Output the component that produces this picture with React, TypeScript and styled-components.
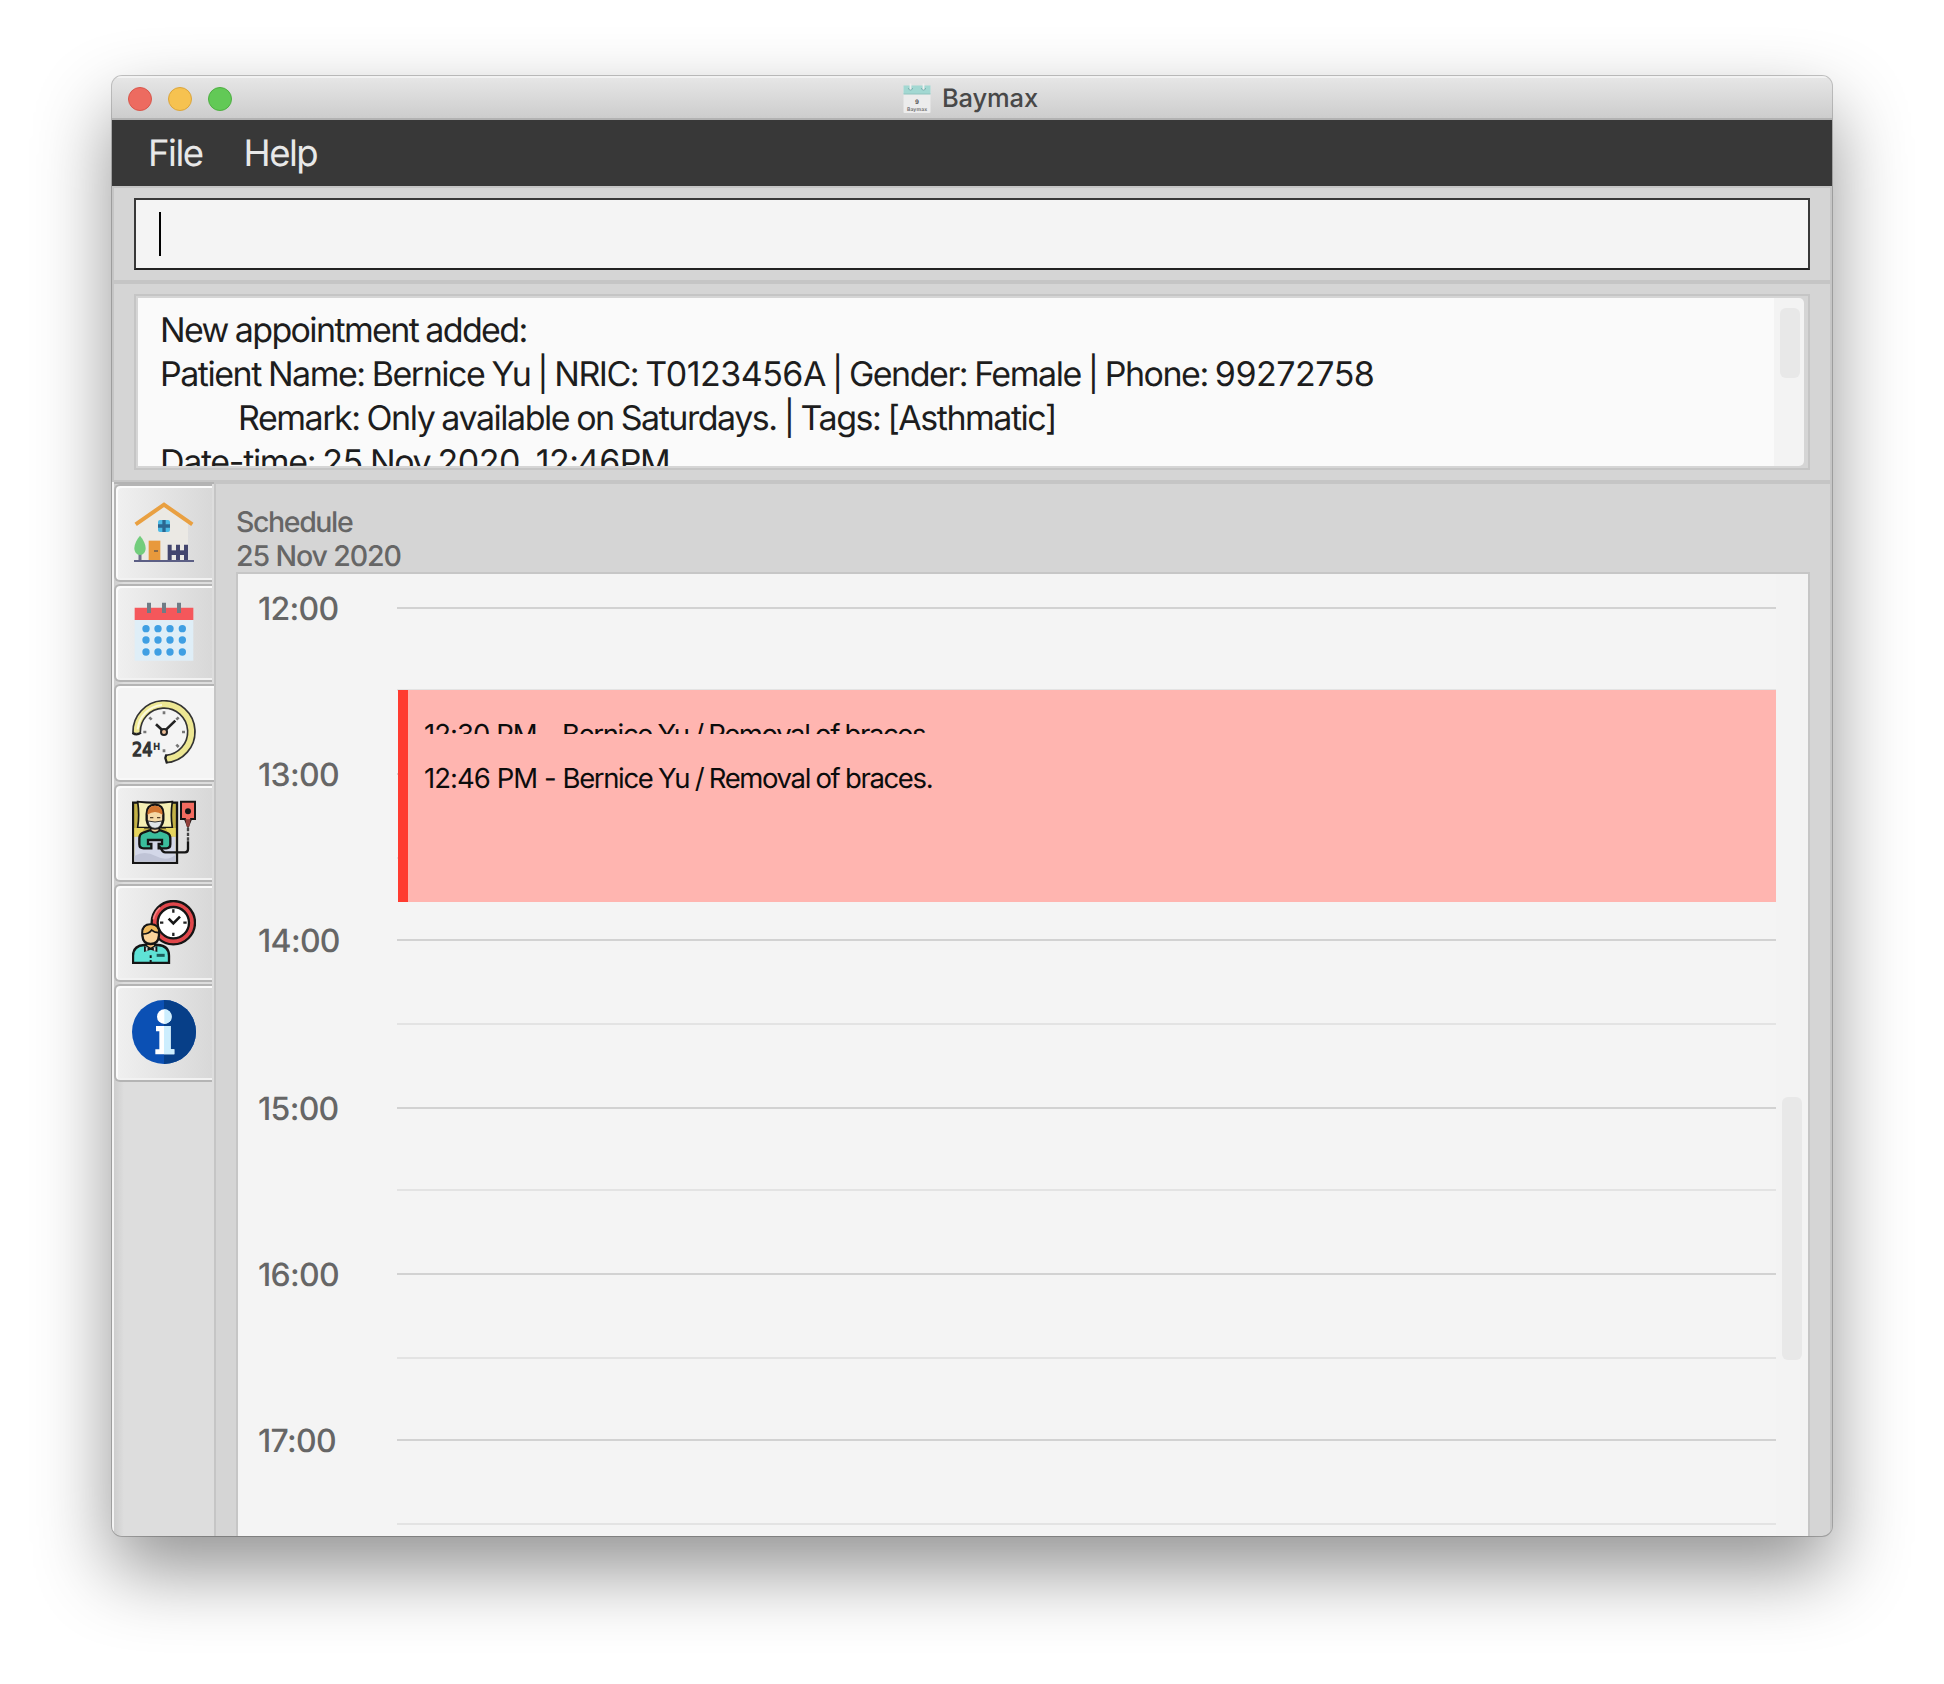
import React from 'react';
import styled, { createGlobalStyle } from 'styled-components';

const GlobalStyle = createGlobalStyle`
  * { box-sizing: border-box; }
  body {
    margin: 0;
    background: #fff;
    font-family: Inter, "Liberation Sans", sans-serif;
    text-rendering: geometricPrecision;
  }
`;

const Desktop = styled.div`
  width: 1944px;
  height: 1684px;
  padding: 76px 112px 148px;
  overflow: hidden;
`;

const Window = styled.div`
  display: flex;
  flex-direction: column;
  height: 1460px;
  border-radius: 10px;
  overflow: hidden;
  background: #d5d5d5;
  box-shadow: 0 0 0 1px rgba(0, 0, 0, 0.22), 0 34px 76px rgba(0, 0, 0, 0.43);
`;

const TitleBar = styled.header`
  display: grid;
  grid-template-columns: 1fr auto 1fr;
  align-items: center;
  height: 44px;
  padding: 0 16px;
  background: linear-gradient(#e7e7e7, #cdcdcd);
  border-bottom: 2px solid #b2b2b2;
  box-shadow: inset 0 2px 0 #f2f2f2;
`;

const Lights = styled.div`
  display: flex;
  gap: 16px;
`;

const Light = styled.span<{ $fill: string; $edge: string }>`
  width: 24px;
  height: 24px;
  margin-top: 2px;
  border-radius: 50%;
  background: ${(p) => p.$fill};
  border: 1px solid ${(p) => p.$edge};
`;

const Title = styled.h1`
  display: flex;
  align-items: center;
  gap: 11px;
  margin: 0;
  padding: 3px 3px 0 0;
  font-size: 25.5px;
  font-weight: 450;
  line-height: 40px;
  letter-spacing: -0.1px;
  color: #484848;
`;

const TitleIcon = styled.svg`
  width: 28px;
  height: 32px;
  margin-top: -3px;
`;

const MenuBar = styled.nav`
  display: flex;
  align-items: center;
  gap: 41px;
  height: 66px;
  padding: 0 36px;
  background: #383838;
`;

const MenuItem = styled.span`
  font-size: 36.5px;
  line-height: 66px;
  letter-spacing: -1.5px;
  color: #e8e8e8;
`;

const Pane = styled.section<{ $height: number }>`
  height: ${(p) => p.$height}px;
  padding: 10px 20px;
  border: 2px solid #c5c5c5;
  background: #d5d5d5;
`;

const CommandField = styled.div`
  display: flex;
  align-items: center;
  height: 72px;
  padding-left: 23px;
  background: #f4f4f4;
  border: 2px solid #383838;
  border-bottom-color: #222;
`;

const Caret = styled.span`
  width: 2px;
  height: 44px;
  background: #000;
`;

const ResultBox = styled.div`
  display: flex;
  height: 176px;
  padding: 2px 4px 2px 2px;
  border: 2px solid #c5c5c5;
`;

const ResultText = styled.div`
  flex: 1;
  overflow: hidden;
  padding: 11px 22px 0;
  background: #fafafa;
`;

const ResultLine = styled.div<{ $indent?: boolean; $spacing: number }>`
  padding-left: ${(p) => (p.$indent ? 78 : 0)}px;
  font-size: 34px;
  line-height: 44px;
  letter-spacing: ${(p) => p.$spacing}px;
  word-spacing: -1px;
  white-space: pre;
  color: #1d1d1d;
`;

const Digits = styled.span`
  letter-spacing: -0.5px;
`;

const ResultTrack = styled.div`
  width: 30px;
  padding: 10px 4px 0 6px;
  background: #f3f3f3;
  border-radius: 0 5px 5px 0;
`;

const Thumb = styled.div<{ $height: number }>`
  width: 20px;
  height: ${(p) => p.$height}px;
  border-radius: 6px;
  background: #e8e8e8;
`;

const Body = styled.div`
  display: flex;
  flex: 1;
  min-height: 0;
`;

const TabStrip = styled.aside`
  display: flex;
  width: 102px;
  border-left: 2px solid #f4f4f4;
`;

const TabColumn = styled.div`
  display: flex;
  flex: 1;
  flex-direction: column;
  gap: 2px;
  border-top: 2px solid #b3b3b3;
  border-right: 2px solid #cfcfcf;
  background: linear-gradient(90deg, #cdcdcd, #dddddd 10px);
`;

const Tab = styled.div<{ $active?: boolean }>`
  flex: none;
  width: ${(p) => (p.$active ? 100 : 98)}px;
  height: 98px;
  padding: 14px 0 0 16px;
  border: 2px solid #b4b4b4;
  border-right: 0;
  border-radius: 6px 0 0 6px;
  background: ${(p) => (p.$active ? '#f4f4f4' : 'linear-gradient(90deg, #f0f0f0, #d8d8d8)')};
  box-shadow: inset 2px 2px 0 #fbfbfb, inset 0 -2px 0 ${(p) => (p.$active ? '#f8f8f8' : '#f2f2f2')};
`;

const TabIcon = styled.svg`
  display: block;
  width: 64px;
  height: 64px;
`;

const Content = styled.main`
  display: flex;
  flex: 1;
  flex-direction: column;
  min-width: 0;
  padding: 20px 20px 0;
  border: 2px solid #c5c5c5;
  border-bottom: 0;
`;

const Headings = styled.div`
  height: 68px;
  padding-top: 1px;
`;

const Heading = styled.div<{ $spacing: number }>`
  font-size: 28.5px;
  font-weight: 450;
  line-height: 34px;
  letter-spacing: ${(p) => p.$spacing}px;
  color: #666;
`;

const Schedule = styled.section`
  display: flex;
  flex: 1;
  min-height: 0;
  overflow: hidden;
  border: 2px solid #c6c6c6;
  border-bottom: 0;
  background: #f4f4f4;
`;

const Timeline = styled.div`
  position: relative;
  flex: 1;
  padding-top: 33px;
`;

const HourRow = styled.div`
  display: grid;
  grid-template-columns: 159px 1fr;
`;

const HourLabel = styled.div`
  margin-top: -18px;
  padding-left: 20px;
  height: 40px;
  font-size: 32px;
  font-weight: 450;
  line-height: 40px;
  letter-spacing: -0.7px;
  color: #666;
`;

const Slot = styled.div<{ $height: number; $half?: boolean }>`
  height: ${(p) => p.$height}px;
  border-top: 2px solid ${(p) => (p.$half ? '#e3e3e3' : '#d2d2d2')};
`;

const AppointmentCard = styled.div<{ $top: number; $height: number }>`
  position: absolute;
  top: ${(p) => p.$top}px;
  left: 160px;
  right: 0;
  height: ${(p) => p.$height}px;
  padding: 24px 0 0 16px;
  border-left: 10px solid #ff3b30;
  background: #ffb5b0;
  font-size: 27.5px;
  line-height: 40px;
  letter-spacing: -1.37px;
  word-spacing: -0.8px;
  white-space: pre;
  color: #0c0c0c;
`;

const StartTime = styled.span`
  letter-spacing: -0.95px;
  word-spacing: 0;
`;

const ScheduleTrack = styled.div`
  width: 32px;
  padding: 523px 6px 0;
  background: #f3f3f3;
`;

const HomeIcon = () => (
  <TabIcon viewBox="0 0 192 192">
    <path d="M24 66 96 14l72 52v114H24z" fill="#ebe9e4" />
    <path d="M11 73 96 14l85 59" fill="none" stroke="#e9a041" strokeWidth="12" />
    <rect x="78" y="60" width="36" height="36" rx="6" fill="#4dbbe6" />
    <path d="M96 60v36M78 78h36" stroke="#2c6791" strokeWidth="10" />
    <path d="M24 150v31" stroke="#6d7089" strokeWidth="9" />
    <path d="M24 107c10 12 17 26 17 37 0 12-7 21-17 21S7 156 7 144c0-11 7-25 17-37z" fill="#72cd7c" />
    <rect x="50" y="122" width="35" height="58" fill="#e8993c" />
    <path d="M66 153h12" stroke="#8a6a48" strokeWidth="6" />
    <path d="M113 134v46M138 134v46M162 134v46" stroke="#43466e" strokeWidth="12" />
    <path d="M108 158h60" stroke="#43466e" strokeWidth="14" />
    <path d="M6 183h180" stroke="#5c5f85" strokeWidth="6" />
  </TabIcon>
);

const CalendarIcon = () => (
  <TabIcon viewBox="0 0 192 192">
    <path d="M8 60h176v122H8z" fill="#dfeef7" />
    <path d="M8 23h176v37H8z" fill="#f5575b" />
    <path d="M51 8v31M96 8v31M141 8v31" stroke="#707b85" strokeWidth="12" />
    {[86, 120, 156].map((y) =>
      [42, 78, 114, 151].map((x) => <circle key={`${x}-${y}`} cx={x} cy={y} r="11" fill="#3f9fe3" />),
    )}
  </TabIcon>
);

const DayClockIcon = () => (
  <TabIcon viewBox="0 0 192 192">
    <path d="M14 98A82 82 0 1 1 102 177" fill="none" stroke="#333" strokeWidth="27" />
    <path d="M14 98A82 82 0 1 1 102 177" fill="none" stroke="#ede793" strokeWidth="17" />
    <path d="M17 88A80 80 0 0 1 90 15" fill="none" stroke="#fbf9dc" strokeWidth="6" />
    <path d="M1 98q12 10 26 0M103 164l-3 10 5 16" fill="none" stroke="#222" strokeWidth="7" />
    <g stroke="#777" strokeWidth="8">
      <path d="M96 34v9M96 148v9M34 96h9M150 96h9M52 52l7 7M133 59l7-7M133 134l7 7" />
    </g>
    <path d="m96 95-24-22M96 95l34-33" stroke="#222" strokeWidth="8" />
    <circle cx="96" cy="96" r="9" fill="#eebf98" stroke="#222" strokeWidth="6" />
    <text x="0" y="168" fontFamily="DejaVu Sans, sans-serif" fontSize="57" textLength="62" lengthAdjust="spacingAndGlyphs" fill="#333" stroke="#333" strokeWidth="4">
      24
    </text>
    <text x="63" y="150" fontFamily="DejaVu Sans, sans-serif" fontWeight="700" fontSize="30" textLength="22" lengthAdjust="spacingAndGlyphs" fill="#333">
      H
    </text>
  </TabIcon>
);

const PatientIcon = () => (
  <TabIcon viewBox="0 0 192 192">
    <path d="M3 8h132v181H3z" fill="#c4b246" stroke="#151515" strokeWidth="7" />
    <path d="M17 5q52 8 104 0-6 40 0 78H17q6-38 0-78z" fill="#f5efb4" stroke="#151515" strokeWidth="5" />
    <path d="M7 84h30l-12 26H7zM131 84h-30l12 26h18z" fill="#e5d45e" />
    <path d="M7 110h124v75H7z" fill="#d3d7e8" />
    <path d="M7 168q30-18 64 0t60-4v21H7z" fill="#bfc3d6" />
    <path d="M52 91h34l20 8q9 4 9 16v18q0 12-12 12H80v-13h10v-12H48v12h10v13H35q-13 0-13-12v-18q0-12 9-16z" fill="#3abd9c" stroke="#151515" strokeWidth="7" />
    <path d="M56 76h26v16q-13 12-26 0z" fill="#f2cb96" stroke="#151515" strokeWidth="5" />
    <path d="M44 42q0-28 25-28t25 28v18q-4 26-25 26T44 60z" fill="#f5d9a6" stroke="#151515" strokeWidth="7" />
    <path d="M46 44q0-27 23-27t23 27q-12-8-23-8t-23 8z" fill="#d0742f" />
    <path d="M48 63q21 6 42 0-4 22-21 22T48 63z" fill="#dfe4e8" stroke="#333" strokeWidth="3" />
    <path d="M54 53h10M75 53h10" stroke="#55402a" strokeWidth="4" />
    <path d="M147 5h42v52h-12l-9 22-9-22h-12z" fill="#f26b60" stroke="#151515" strokeWidth="6" />
    <path d="M160 58h16l-4 22h-8z" fill="#93403b" />
    <circle cx="168" cy="34" r="9" fill="#151515" />
    <path d="M168 84v40" stroke="#444" strokeWidth="7" strokeDasharray="10 4" />
    <path d="M168 124v24q0 9-9 9H100q-8 0-12-10l-6-8" fill="none" stroke="#151515" strokeWidth="7" />
  </TabIcon>
);

const AppointmentIcon = () => (
  <TabIcon viewBox="0 0 192 192">
    <circle cx="124" cy="68" r="65" fill="#e0474b" stroke="#151515" strokeWidth="7" />
    <path d="M64 58a62 62 0 0 1 20-35" fill="none" stroke="#f58284" strokeWidth="5" />
    <circle cx="124" cy="68" r="47" fill="#fff" stroke="#151515" strokeWidth="7" />
    <path d="M124 28v10M124 98v10M84 68h10M154 68h10" stroke="#222" strokeWidth="7" />
    <path d="m110 56 14 14 20-20" fill="none" stroke="#151515" strokeWidth="8" />
    <path d="M3 189v-22q0-30 34-32h40q34 2 34 32v22z" fill="#5fe2d6" stroke="#151515" strokeWidth="7" />
    <path d="M44 122h24v16l-12 8-12-8z" fill="#efbd7c" stroke="#151515" strokeWidth="4" />
    <path d="M31 98q0-25 25-25t25 25v8q-2 26-25 26t-25-26z" fill="#fbd49b" stroke="#151515" strokeWidth="7" />
    <path d="M34 100q0-24 22-24 21 0 22 21-14 0-20-8-8 12-24 11z" fill="#eeb85c" />
    <path d="M33 102q18 0 26-12 8 8 21 8" fill="none" stroke="#151515" strokeWidth="5" />
    <path d="m36 138 20 8 20-8v18l-20-7-20 7z" fill="#151515" />
    <path d="M44 142v10M68 142v10" stroke="#ddd" strokeWidth="5" />
    <path d="M56 166v8M56 180v6" stroke="#151515" strokeWidth="6" />
    <path d="M74 166h24" stroke="#1c5c5a" strokeWidth="9" />
  </TabIcon>
);

const InfoIcon = () => (
  <TabIcon viewBox="0 0 192 192">
    <circle cx="96" cy="96" r="96" fill="#0b50b4" />
    <path d="M96 0a96 96 0 0 1 0 192z" fill="#073f88" />
    <circle cx="97" cy="50" r="22" fill="#fff" />
    <path d="M97 28a22 22 0 0 1 0 44z" fill="#cdeefe" />
    <path d="M72 78h44v70h11v15H70v-15h12V94H72z" fill="#fff" />
    <path d="M96 78h20v70h11v15H96z" fill="#cdeefe" />
  </TabIcon>
);

const tabs = [
  { id: 'home', Icon: HomeIcon },
  { id: 'calendar', Icon: CalendarIcon },
  { id: 'schedule', Icon: DayClockIcon, active: true },
  { id: 'patients', Icon: PatientIcon },
  { id: 'appointments', Icon: AppointmentIcon },
  { id: 'info', Icon: InfoIcon },
];

const hours = [
  { label: '12:00', first: 82, second: 84 },
  { label: '13:00', first: 84, second: 82 },
  { label: '14:00', first: 84, second: 84 },
  { label: '15:00', first: 82, second: 84 },
  { label: '16:00', first: 84, second: 82 },
  { label: '17:00', first: 84, second: 82 },
];

const appointments = [
  { time: '12:30 PM', title: 'Bernice Yu / Removal of braces.', top: 116 },
  { time: '12:46 PM', title: 'Bernice Yu / Removal of braces.', top: 160 },
];

const results = [
  { text: 'New appointment added:', spacing: -1.62 },
  {
    text: 'Patient Name: Bernice Yu | NRIC: T0123456A | Gender: Female | Phone: 99272758',
    spacing: -1.48,
  },
  { text: 'Remark: Only available on Saturdays. | Tags: [Asthmatic]', spacing: -1.48, indent: true },
  { text: 'Date-time: 25 Nov 2020, 12:46PM', spacing: -1.35 },
];

// Digit runs are set wider than the words around them.
const withDigits = (text: string) =>
  text.split(/(\d+)/).map((part, i) => (i % 2 ? <Digits key={i}>{part}</Digits> : part));

export default function App() {
  return (
    <>
      <GlobalStyle />
      <Desktop>
        <Window>
          <TitleBar>
            <Lights>
              <Light $fill="#ed6b60" $edge="#d8574c" />
              <Light $fill="#f6c250" $edge="#dba53c" />
              <Light $fill="#62c956" $edge="#4eaf42" />
            </Lights>
            <Title>
              <TitleIcon viewBox="0 0 28 32">
                <rect x="0.5" y="4" width="27" height="27" rx="1" fill="#ececec" />
                <path d="M0.5 3.500h27V12h-27z" fill="#a2d8d2" />
                <path d="M0.5 11.500h27v1h-27z" fill="#8fc4be" />
                <path d="M5.500 6a2 2 0 0 0 4 0M18.500 6a2 2 0 0 0 4 0" fill="none" stroke="#7aa" strokeWidth="1" />
                <path d="M7.500 1.500v6M20.500 1.500v6" stroke="#eee" strokeWidth="1.800" />
                <text x="14" y="21.500" textAnchor="middle" fontSize="6" fontWeight="700" fill="#555">9</text>
                <text x="4" y="28.500" fontSize="5" fontWeight="700" textLength="20" fill="#777">Baymax</text>
              </TitleIcon>
              Baymax
            </Title>
          </TitleBar>
          <MenuBar>
            <MenuItem>File</MenuItem>
            <MenuItem>Help</MenuItem>
          </MenuBar>
          <Pane $height={96}>
            <CommandField>
              <Caret />
            </CommandField>
          </Pane>
          <Pane $height={200}>
            <ResultBox>
              <ResultText>
                {results.map(({ text, spacing, indent }) => (
                  <ResultLine key={text} $spacing={spacing} $indent={indent}>
                    {withDigits(text)}
                  </ResultLine>
                ))}
              </ResultText>
              <ResultTrack>
                <Thumb $height={70} />
              </ResultTrack>
            </ResultBox>
          </Pane>
          <Body>
            <TabStrip>
              <TabColumn>
                {tabs.map(({ id, Icon, active }) => (
                  <Tab key={id} $active={active}>
                    <Icon />
                  </Tab>
                ))}
              </TabColumn>
            </TabStrip>
            <Content>
              <Headings>
                <Heading $spacing={-1.4}>Schedule</Heading>
                <Heading $spacing={-1.1}>25 Nov 2020</Heading>
              </Headings>
              <Schedule>
                <Timeline>
                  {hours.map(({ label, first, second }) => (
                    <HourRow key={label}>
                      <HourLabel>{label}</HourLabel>
                      <div>
                        <Slot $height={first} />
                        <Slot $height={second} $half />
                      </div>
                    </HourRow>
                  ))}
                  {appointments.map(({ time, title, top }) => (
                    <AppointmentCard key={time} $top={top} $height={168}>
                      <StartTime>{time} - </StartTime>
                      {title}
                    </AppointmentCard>
                  ))}
                </Timeline>
                <ScheduleTrack>
                  <Thumb $height={263} />
                </ScheduleTrack>
              </Schedule>
            </Content>
          </Body>
        </Window>
      </Desktop>
    </>
  );
}
